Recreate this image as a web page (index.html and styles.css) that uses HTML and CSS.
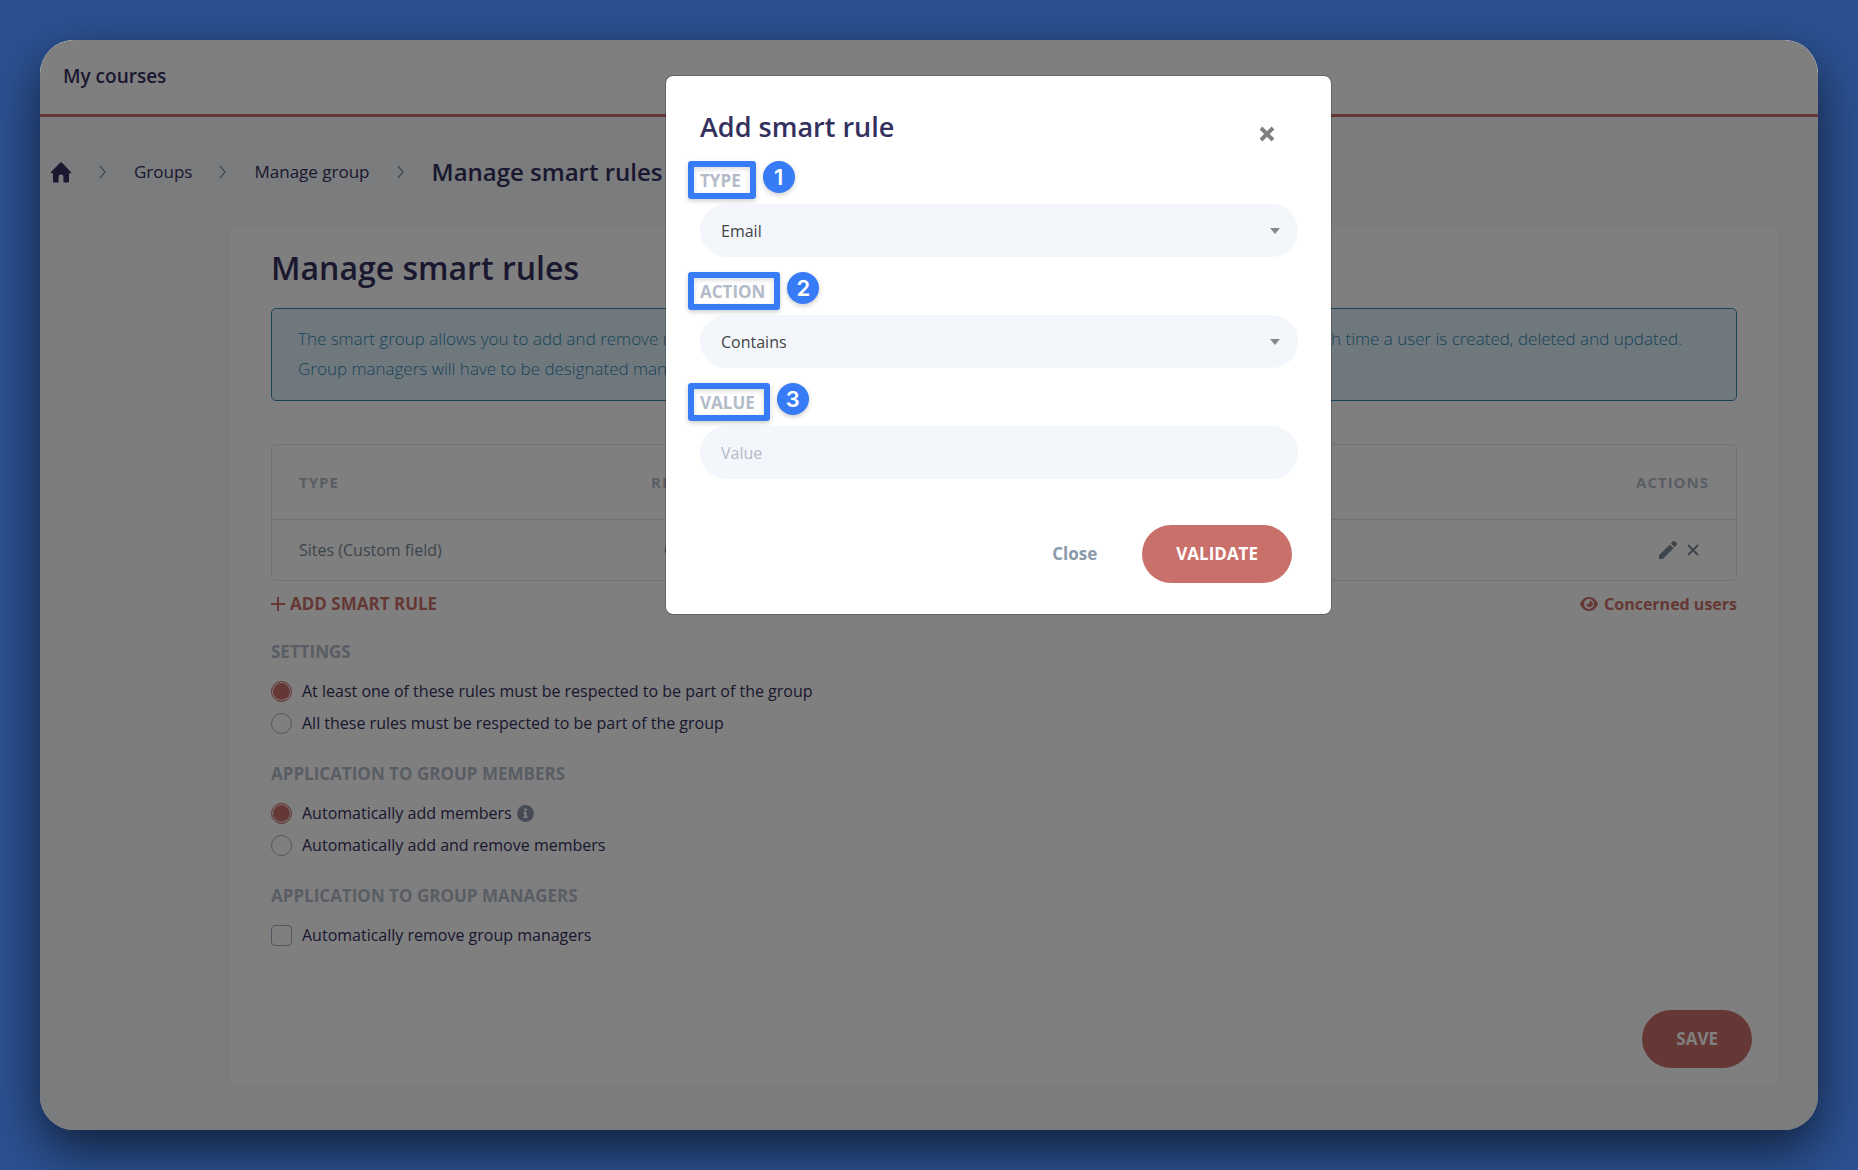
FILE: index.html
```html
<!DOCTYPE html>
<html lang="en">
<head>
    <meta charset="UTF-8">
    <meta name="viewport" content="width=device-width, initial-scale=1.0">
    <title>Manage smart rules</title>
    <link rel="stylesheet" href="styles.css">
</head>
<body>
    <div class="window">
        <header class="topbar">
            <a href="#">My courses</a>
        </header>

        <nav class="breadcrumb">
            <a href="#" aria-label="Home">
                <svg class="home" viewBox="0 0 22 22"><path d="M10.300 1.500a1 1 0 0 1 1.400 0L21.200 11.200a.6.6 0 0 1-.4 1H19v8.200a1 1 0 0 1-1 1h-3.600a1 1 0 0 1-1-1v-4.600a2.400 2.400 0 0 0-4.800 0v4.600a1 1 0 0 1-1 1H4a1 1 0 0 1-1-1v-8.200H1.200a.6.6 0 0 1-.4-1z"/></svg>
            </a>
            <svg class="chevron" viewBox="0 0 8 14"><path d="M1 1l5 6-5 6"/></svg>
            <a href="#">Groups</a>
            <svg class="chevron" viewBox="0 0 8 14"><path d="M1 1l5 6-5 6"/></svg>
            <a href="#">Manage group</a>
            <svg class="chevron" viewBox="0 0 8 14"><path d="M1 1l5 6-5 6"/></svg>
            <span class="current">Manage smart rules</span>
        </nav>

        <main class="card">
            <h1>Manage smart rules</h1>
            <div class="alert">
                The smart group allows you to add and remove members automatically according to the defined rules. These rules are then applied each time a user is created, deleted and updated.<br>
                Group managers will have to be designated manually.
            </div>

            <table class="rules">
                <thead>
                    <tr><th>Type</th><th>Restriction</th><th class="right">Actions</th></tr>
                </thead>
                <tbody>
                    <tr>
                        <td>Sites (Custom field)</td>
                        <td class="restriction">Contains</td>
                        <td class="right">
                            <div class="actions">
                                <button type="button" aria-label="Edit">
                                    <svg class="pencil" viewBox="0 0 18 18"><path d="M0 14.200 10.800 3.400l3.800 3.800L3.800 18H0zM11.800 2.400 13.700.5a1.600 1.600 0 0 1 2.300 0l1.500 1.500a1.600 1.600 0 0 1 0 2.300L15.600 6.200z"/></svg>
                                </button>
                                <button type="button" aria-label="Delete">
                                    <svg class="cross" viewBox="0 0 12 12"><path d="M1 1l10 10M11 1L1 11"/></svg>
                                </button>
                            </div>
                        </td>
                    </tr>
                </tbody>
            </table>

            <div class="links">
                <a href="#" class="add">
                    <svg class="plus" viewBox="0 0 14 14"><path d="M7 0v14M0 7h14"/></svg>ADD SMART RULE
                </a>
                <a href="#" class="users">
                    <svg class="eye" viewBox="0 0 18 14"><path fill-rule="evenodd" d="M9 0C4.800 0 1.600 2.800 0 7c1.600 4.200 4.800 7 9 7s7.400-2.800 9-7C16.400 2.800 13.200 0 9 0zm0 2a5 5 0 1 1 0 10A5 5 0 0 1 9 2zm0 1.700a1.900 1.900 0 0 1-2.700 2.900 3.300 3.300 0 1 0 2.700-2.900z"/></svg>Concerned users
                </a>
            </div>

            <fieldset>
                <legend>Settings</legend>
                <label><input type="radio" name="settings" checked>At least one of these rules must be respected to be part of the group</label>
                <label><input type="radio" name="settings">All these rules must be respected to be part of the group</label>
            </fieldset>
            <fieldset>
                <legend>Application to group members</legend>
                <label><input type="radio" name="members" checked>Automatically add members
                    <svg class="info" viewBox="0 0 17 17"><circle cx="8.500" cy="8.500" r="8.500"/><path d="M7.200 3.500h2.500v2.400H7.200zM6.400 7h3.300v4.500h1V13H6.400v-1.500h1v-3h-1z"/></svg>
                </label>
                <label><input type="radio" name="members">Automatically add and remove members</label>
            </fieldset>
            <fieldset>
                <legend>Application to group managers</legend>
                <label><input type="checkbox">Automatically remove group managers</label>
            </fieldset>

            <button type="button" class="btn save">SAVE</button>
        </main>

        <div class="overlay">
            <form class="modal" role="dialog" aria-labelledby="modal-title">
                <div class="modal-head">
                    <h2 id="modal-title">Add smart rule</h2>
                    <button type="button" class="dismiss" aria-label="Close">
                        <svg viewBox="0 0 16 16"><path d="M2 2l12 12M14 2L2 14"/></svg>
                    </button>
                </div>

                <div class="field">
                    <div class="field-head">
                        <label for="type" class="mark">TYPE</label><span class="badge">1</span>
                    </div>
                    <select id="type"><option>Email</option></select>
                </div>
                <div class="field">
                    <div class="field-head">
                        <label for="action" class="mark">ACTION</label><span class="badge">2</span>
                    </div>
                    <select id="action"><option>Contains</option></select>
                </div>
                <div class="field">
                    <div class="field-head">
                        <label for="value" class="mark">VALUE</label><span class="badge">3</span>
                    </div>
                    <input id="value" type="text" placeholder="Value">
                </div>

                <div class="modal-foot">
                    <button type="button" class="close">Close</button>
                    <button type="button" class="btn">VALIDATE</button>
                </div>
            </form>
        </div>
    </div>
</body>
</html>
```
FILE: styles.css
```css
*{margin: 0;padding: 0;box-sizing: border-box;}
body{background: #2b5191;padding: 40px;min-height: 100vh;display: flex;font-family: "Open Sans", "Noto Sans", sans-serif;font-size: 16px;line-height: 24px;color: #34305e;}
a{color: inherit;text-decoration: none;}
button{font: inherit;border: 0;background: none;color: inherit;}
svg{display: block;fill: currentColor;}

.window{position: relative;flex: 1;border-radius: 34px;overflow: hidden;background: #f6f8fb;box-shadow: 0 20px 50px rgba(0,0,0,.6);}
.topbar{background: #fff;border-bottom: 3px solid #ca706a;padding: 24px 23px 26px;font-size: 19px;font-weight: 600;}

.breadcrumb{display: flex;align-items: center;height: 110px;padding-left: 10px;font-size: 17px;}
.home{width: 22px;height: 22px;}
.chevron{width: 8px;height: 14px;margin: 0 27px;fill: none;stroke: #8d97ab;stroke-width: 1.5;}
.current{font-size: 24px;font-weight: 600;}

.card{margin: 0 40px 44px 190px;padding: 16px 41px;background: #fff;border-radius: 8px;}
h1{font-size: 32px;line-height: 50px;font-weight: 600;}
.alert{margin-top: 15px;padding: 15px 26px 16px;border: 1px solid #3187b3;border-radius: 5px;background: #dff0fa;color: #3187b3;font-size: 17px;line-height: 30px;font-weight: 300;}

.rules{width: 100%;margin-top: 43px;border: 1px solid #dfe6ee;border-radius: 5px;border-spacing: 0;text-align: left;table-layout: fixed;}
.rules th{height: 74px;padding: 0 27px;font-size: 15px;font-weight: 700;letter-spacing: 1px;text-transform: uppercase;color: #b3bac8;}
.rules th:first-child{width: 352px;}
.rules td{height: 61px;padding: 0 27px;border-top: 1px solid #dfe6ee;color: #7b8a9a;}
.rules .restriction{padding-left: 40px;}
.rules .right{text-align: right;}
.actions{display: flex;justify-content: flex-end;align-items: center;gap: 10px;padding-right: 10px;}
.pencil{width: 18px;height: 18px;}
.cross{width: 12px;height: 12px;stroke: currentColor;stroke-width: 2;}

.links{display: flex;justify-content: space-between;margin-top: 10px;line-height: 26px;color: #ca706a;font-weight: 700;}
.links a{display: flex;align-items: center;}
.add{gap: 5px;font-size: 17px;}
.users{gap: 6px;}
.plus{width: 14px;height: 14px;stroke: currentColor;stroke-width: 2;}
.eye{width: 18px;height: 14px;}

fieldset{border: 0;margin-top: 23px;}
legend{margin-bottom: 11px;font-size: 17px;font-weight: 700;text-transform: uppercase;color: #b3bac8;}
fieldset label{display: flex;align-items: center;height: 32px;}
fieldset input{appearance: none;width: 21px;height: 21px;margin-right: 10px;border: 1px solid #a9a6c4;border-radius: 50%;}
fieldset input[type=checkbox]{border-radius: 4px;}
fieldset input:checked{border-color: #ca706a;background: #ca706a;box-shadow: inset 0 0 0 1px #fff;}
.info{width: 17px;height: 17px;margin-left: 5px;fill: #8d97ab;}
.info path{fill: #fff;}

.btn{height: 58px;padding: 0 34px;border-radius: 29px;background: #ca706a;color: #fff;font-size: 17px;font-weight: 700;}
.save{display: block;margin: 59px -15px 0 auto;}

/* modal */
.overlay{position: absolute;inset: 0;display: flex;justify-content: center;align-items: flex-start;padding: 35px 0 35px 139px;background: rgba(0,0,0,.5);}
.modal{width: 667px;padding: 27px 33px 31px 34px;border: 1px solid rgba(0,0,0,.2);border-radius: 8px;background: #fff;background-clip: padding-box;}
.modal-head{display: flex;justify-content: space-between;align-items: center;margin-bottom: 10px;}
h2{font-size: 27px;line-height: 48px;font-weight: 600;}
.dismiss{margin: 14px 23px 0 0;color: #808080;}
.dismiss svg{width: 16px;height: 16px;stroke: currentColor;stroke-width: 4;}
.field{margin-bottom: 15px;}
.field-head{display: flex;align-items: flex-start;gap: 7px;margin: 0 0 5px -12px;}
.mark{padding: 1px 9px 0 6px;height: 38px;line-height: 26px;border: 6px solid #377cf6;border-radius: 3px;font-size: 17px;font-weight: 700;color: #b3bac8;box-shadow: 0 2px 5px rgba(0,0,0,.2), inset 0 2px 5px rgba(0,0,0,.15);}
.badge{width: 32px;height: 32px;border-radius: 50%;background: #377cf6;color: #fff;font-family: Inter, sans-serif;font-size: 22px;line-height: 32px;font-weight: 600;text-align: center;box-shadow: 0 2px 5px rgba(0,0,0,.2);}
.field select, .field input{display: block;width: 100%;height: 53px;padding: 0 21px;border: 0;border-radius: 27px;appearance: none;background: #f3f6fb;color: #444;font: inherit;}
.field select{background: #f3f6fb url("data:image/svg+xml,%3Csvg xmlns='http://www.w3.org/2000/svg' width='10' height='6'%3E%3Cpath d='M0 0h10L5 6z' fill='%23888'/%3E%3C/svg%3E") no-repeat right 18px center;}
.field input::placeholder{color: #b3bac8;}
.modal-foot{display: flex;justify-content: flex-end;align-items: center;gap: 45px;margin: 46px 6px 0 0;}
.close{font-size: 17px;font-weight: 700;color: #8b9aab;}
```
